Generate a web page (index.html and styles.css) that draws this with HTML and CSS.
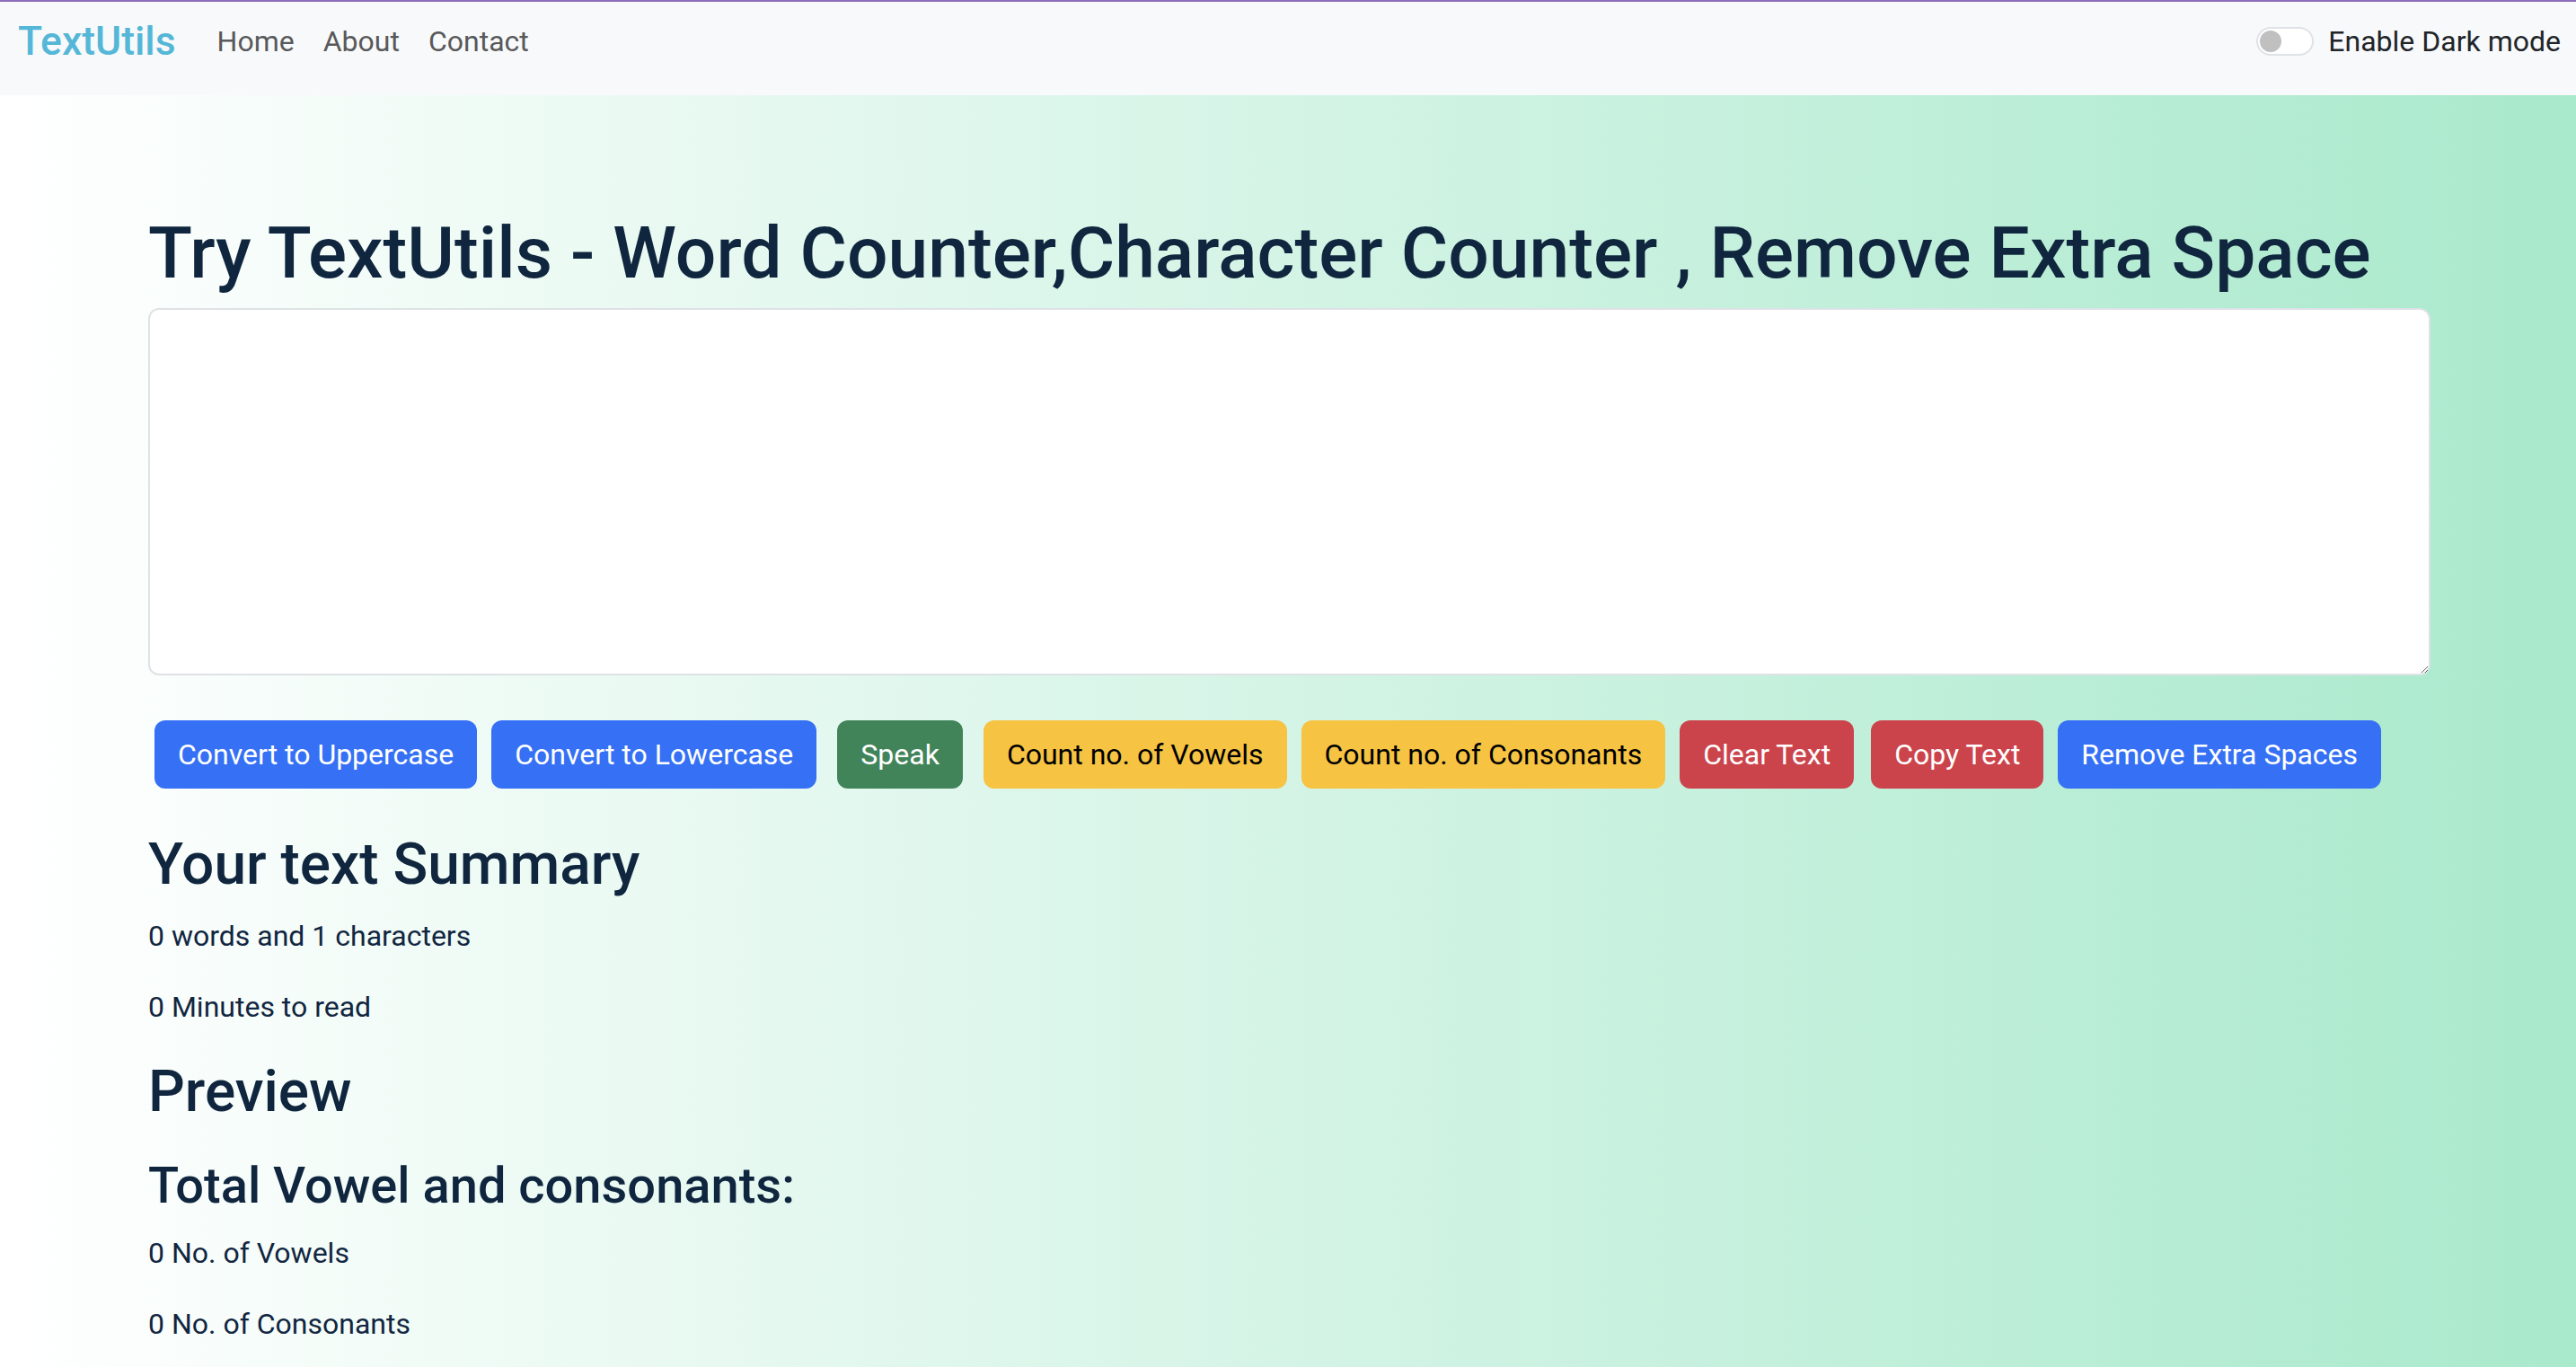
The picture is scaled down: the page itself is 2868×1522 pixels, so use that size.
FILE: index.html
```html
<!DOCTYPE html>
<html lang="en">
<head>
<meta charset="utf-8">
<title>TextUtils</title>
<link rel="stylesheet" href="styles.css">
</head>
<body>
<nav class="navbar">
  <div class="nav-left">
    <a class="brand" href="#">TextUtils</a>
    <ul class="nav-links">
      <li><a href="#">Home</a></li>
      <li><a href="#">About</a></li>
      <li><a href="#">Contact</a></li>
    </ul>
  </div>
  <div class="switch">
    <span class="switch-track"><span class="switch-knob"></span></span>
    <span class="switch-label">Enable Dark mode</span>
  </div>
</nav>
<main class="container">
  <h1 class="title">Try TextUtils - Word Counter,Character Counter , Remove Extra Space</h1>
  <textarea class="textbox"></textarea>
  <div class="btn-row">
    <button class="btn btn-blue">Convert to Uppercase</button>
    <button class="btn btn-blue">Convert to Lowercase</button>
    <button class="btn btn-green spaced">Speak</button>
    <button class="btn btn-yellow spaced">Count no. of Vowels</button>
    <button class="btn btn-yellow">Count no. of Consonants</button>
    <button class="btn btn-red">Clear Text</button>
    <button class="btn btn-red nudge">Copy Text</button>
    <button class="btn btn-blue">Remove Extra Spaces</button>
  </div>
  <section class="summary">
    <h2 class="sec-title">Your text Summary</h2>
    <p class="stat first">0 words and 1 characters</p>
    <p class="stat">0 Minutes to read</p>
    <h2 class="sec-title preview">Preview</h2>
    <h3 class="sub-title">Total Vowel and consonants:</h3>
    <p class="stat first">0 No. of Vowels</p>
    <p class="stat">0 No. of Consonants</p>
  </section>
</main>
</body>
</html>
```

FILE: styles.css
```css
* { box-sizing: border-box; }
html, body { margin: 0; padding: 0; }
body {
  min-height: 1522px;
  font-family: Roboto, "Liberation Sans", sans-serif;
  color: #112641;
  background: linear-gradient(to right, #ffffff 0%, #a9e9cc 100%);
}

.navbar {
  display: flex;
  align-items: center;
  justify-content: space-between;
  height: 106px;
  border-top: 2px solid #8c6fba;
  padding: 0 17px 16px 20px;
  background: #f8f9fa;
}
.nav-left { display: flex; align-items: center; }
.brand {
  font-size: 44.5px;
  font-weight: 500;
  color: #55b7d7;
  text-decoration: none;
  line-height: 1.5;
  margin-right: 30px;
}
.nav-links { display: flex; list-style: none; margin: 0; padding: 0; }
.nav-links a {
  display: block;
  padding: 0 16px;
  font-size: 32px;
  line-height: 48px;
  color: #58595b;
  text-decoration: none;
}
.switch { display: flex; align-items: center; }
.switch-track {
  display: flex;
  align-items: center;
  width: 64px;
  height: 32px;
  border: 2px solid #dfe2e6;
  border-radius: 16px;
  background: #fff;
  padding-left: 2px;
  margin-right: 16px;
}
.switch-knob {
  width: 24px;
  height: 24px;
  border-radius: 50%;
  background: #c0c0c0;
}
.switch-label { font-size: 32px; line-height: 48px; color: #212529; }

.container { padding: 128px 162px 0 165px; }
.title {
  margin: 0 0 12px;
  font-size: 80.4px;
  line-height: 96.5px;
  font-weight: 500;
  color: #10263f;
}
.textbox {
  display: block;
  width: 100%;
  height: 409px;
  border: 2px solid #dee2e6;
  border-radius: 12px;
  background: #fff;
  resize: vertical;
  font-family: inherit;
  font-size: 32px;
}
.btn-row { display: flex; gap: 16px; margin: 50px 0 0 7px; }
.btn {
  height: 76px;
  padding: 0 26px;
  border: none;
  border-radius: 12px;
  font-family: inherit;
  font-size: 32px;
  color: #fff;
  white-space: nowrap;
}
.btn.spaced { margin-left: 7px; }
.btn.nudge { margin-left: 3px; }
.btn-blue { background: #3570f5; }
.btn-green { background: #42845a; }
.btn-yellow { background: #f6c343; color: #000; }
.btn-red { background: #cc444b; }

.summary { margin-top: 46px; }
.sec-title {
  margin: 0;
  font-size: 64px;
  line-height: 77px;
  font-weight: 500;
  color: #10263f;
}
.sec-title.preview { margin-top: 32px; }
.sub-title {
  margin: 33px 0 0;
  font-size: 56px;
  line-height: 67px;
  font-weight: 500;
  color: #10263f;
}
.stat {
  margin: 31px 0 0;
  font-size: 32px;
  line-height: 48px;
}
.stat.first { margin-top: 17px; }
```
